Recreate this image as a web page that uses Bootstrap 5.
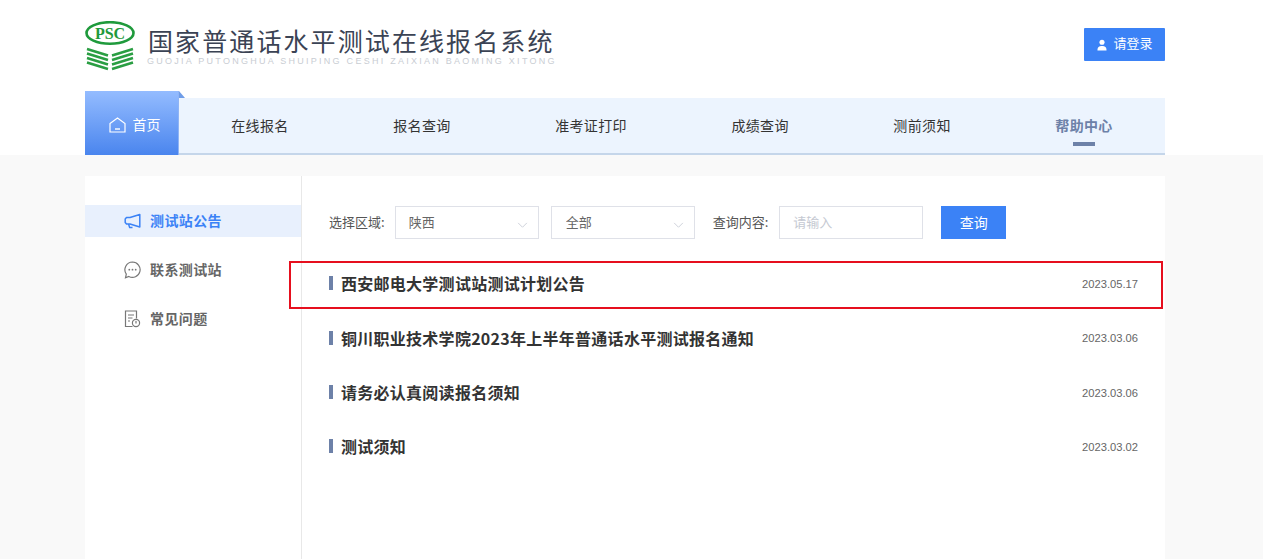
<!DOCTYPE html>
<html lang="zh-CN">
<head>
<meta charset="utf-8">
<title>国家普通话水平测试在线报名系统</title>
<link href="https://cdn.jsdelivr.net/npm/bootstrap@5.3.0/dist/css/bootstrap.min.css" rel="stylesheet">
<style>
html,body{overflow:hidden;height:559px}
body{font-family:"Noto Sans CJK SC","Liberation Sans",sans-serif;background:#f9f9f9;color:#333}
.top-band{background:#fff;height:155px}
.wrap{width:1080px;margin-left:85px}
.site-head{height:91px}
.logo-box{padding-top:21px;width:480px}
.logo-text{margin-left:12px}
.logo-title{font-size:25px;line-height:32px;height:32px;letter-spacing:2.1px;padding-left:1px;color:#3b4354;white-space:nowrap;margin-top:3px}
.logo-sub{font-family:"Liberation Sans",sans-serif;font-size:9px;line-height:10px;letter-spacing:2.26px;color:#c9cdd3;white-space:nowrap;margin-top:0}
.login-btn{width:81px;height:33px;margin-top:28px;background:#3b82f6;border:0;border-radius:1px;color:#fff;font-size:13px;padding:0 0 0 1px;gap:6px}
.login-btn span{padding-bottom:3px}
.main-nav{height:64px;align-items:flex-end}
.nav-tab{width:94px;height:64px;background:linear-gradient(#94bcff,#4a85ee);color:#fff;font-size:14px;gap:7px;position:relative;border-right:1px solid #8fb4f5;padding:2px 0 0 6px}
.nav-tab svg{margin-top:2px}
.nav-tab::after{content:"";position:absolute;left:94px;top:0;border-style:solid;border-width:7px 0 0 6px;border-color:transparent transparent transparent #6f9de8}
.nav-rest{height:57px;background:#ecf4fe;border-bottom:2px solid #c5d6ea;padding-bottom:0}
.nav-rest a{color:#333;font-size:14px;letter-spacing:.35px;line-height:54px;text-decoration:none;position:relative;display:block}
.nav-rest a.nav-on{color:#6d81a8;font-weight:700}
.nav-rest a.nav-on::after{content:"";position:absolute;left:18px;bottom:7px;width:22px;height:4px;background:#6d81a8}
.page-card{background:#fff;margin-top:21px;height:500px}
.side-col{width:217px;border-right:1px solid #e8e8e8;padding-top:29px}
.side-item{height:32px;margin-bottom:17px;padding-left:39px;gap:9px;font-size:14px;letter-spacing:.4px;font-weight:700;color:#666}
.side-item span{padding-bottom:2px}
.side-item.side-on{background:#e8f0fd;color:#3b82f6}
.body-col{padding:30px 27px 0}
.filter-row{height:33px;font-size:13px;color:#555}
.filter-row label{padding-bottom:2px}
.filter-sel{width:144px;height:33px;margin-left:10px;border:1px solid #dfe1e8;border-radius:0;font-size:13px;color:#666;padding:0 13px 2px;line-height:27px;box-shadow:none;
background-image:url("data:image/svg+xml,%3csvg xmlns='http://www.w3.org/2000/svg' viewBox='0 0 12 8'%3e%3cpath fill='none' stroke='%23c8ccd6' d='M1 1l5 5 5-5'/%3e%3c/svg%3e");background-size:11px 7px;background-position:right 10px top 15px}
.filter-sel+.filter-sel{margin-left:12px;padding-left:14px}
.filter-lab2{margin-left:18px}
.filter-inp{width:144px;height:33px;margin-left:11px;border:1px solid #dfe1e8;border-radius:0;font-size:13px;padding:0 13px 2px}
.filter-inp::placeholder{color:#c5c9d2;opacity:1}
.query-btn{width:65px;height:33px;margin-left:18px;background:#3b82f6;border:0;border-radius:0;color:#fff;font-size:14px;padding:0}
.news-list{margin-top:18px}
.news-row{height:54.4px;position:relative}
.news-title{font-size:16px;letter-spacing:.27px;font-weight:700;color:#333;text-decoration:none;padding-left:12px;padding-bottom:2px;position:relative}
.news-title::before{content:"";position:absolute;left:0;top:50%;margin-top:-8px;width:4px;height:14px;background:#6d81a8}
.news-date{font-family:"Liberation Sans",sans-serif;font-size:11.2px;color:#666}
.red-frame{position:absolute;left:-40px;right:-25px;top:4px;height:48px;border:2px solid #e60f1e;pointer-events:none}
</style>
</head>
<body>
<div class="top-band">
  <div class="wrap">
    <header class="site-head d-flex justify-content-between">
      <div class="logo-box d-flex">
        <svg width="50" height="50" viewBox="0 0 50 50" class="flex-shrink-0">
          <ellipse cx="25" cy="12" rx="23.500" ry="10.800" fill="none" stroke="#1f9a3c" stroke-width="2.600"/>
          <text x="25" y="17.500" text-anchor="middle" font-family="Liberation Serif,serif" font-weight="700" font-size="16" fill="#1f9a3c">PSC</text>
          <path d="M2 28l21 6.500M2 32.500l21 6.500M2 37l21 6.500M2 41.500l21 6.500M48 28l-21 6.500M48 32.500l-21 6.500M48 37l-21 6.500M48 41.500l-21 6.500" fill="none" stroke="#2a9e43" stroke-width="2.600"/>
        </svg>
        <div class="logo-text">
          <div class="logo-title">国家普通话水平测试在线报名系统</div>
          <div class="logo-sub">GUOJIA PUTONGHUA SHUIPING CESHI ZAIXIAN BAOMING XITONG</div>
        </div>
      </div>
      <button class="btn login-btn d-flex align-items-center justify-content-center" type="button">
        <svg width="10" height="12" viewBox="0 0 11 12"><circle cx="5.500" cy="3" r="2.800" fill="#fff"/><path d="M.5 12c0-4 1.800-5 5-5s5 1 5 5z" fill="#fff"/></svg>
        <span>请登录</span>
      </button>
    </header>
    <nav class="main-nav d-flex">
      <a class="nav-tab d-flex align-items-center justify-content-center text-decoration-none" href="#">
        <svg width="17" height="16" viewBox="0 0 17 16"><path d="M1 6.500L8.500 1 16 6.500V15H1z" fill="none" stroke="#fff" stroke-width="1.200"/><path d="M6 12h5" stroke="#fff" stroke-width="1.400"/></svg>
        <span>首页</span>
      </a>
      <div class="nav-rest flex-grow-1 d-flex justify-content-around">
        <a href="#">在线报名</a>
        <a href="#">报名查询</a>
        <a href="#">准考证打印</a>
        <a href="#">成绩查询</a>
        <a href="#">测前须知</a>
        <a href="#" class="nav-on">帮助中心</a>
      </div>
    </nav>
  </div>
</div>
<div class="wrap page-card d-flex">
  <aside class="side-col flex-shrink-0">
    <div class="side-item side-on d-flex align-items-center">
      <svg width="17" height="17" viewBox="0 0 17 17"><path d="M15.800 1.500v12.500L6 11H2.500L1.200 9.500V6L2.500 4.500H6zM4.500 11l1.200 3.500h2.800" fill="none" stroke="#3b82f6" stroke-width="1.500" stroke-linejoin="round"/></svg>
      <span>测试站公告</span>
    </div>
    <div class="side-item d-flex align-items-center">
      <svg width="17" height="18" viewBox="0 0 17 18"><path d="M8.500 1a7.700 7.700 0 1 1-3.700 14.500L1.500 16.800l.8-3.700A7.700 7.700 0 0 1 8.500 1z" fill="none" stroke="#777" stroke-width="1.200"/><circle cx="5.300" cy="8.700" r=".9" fill="#777"/><circle cx="8.500" cy="8.700" r=".9" fill="#777"/><circle cx="11.700" cy="8.700" r=".9" fill="#777"/></svg>
      <span>联系测试站</span>
    </div>
    <div class="side-item d-flex align-items-center">
      <svg width="17" height="18" viewBox="0 0 17 18"><path d="M8.500 16.500H1.500V1h11v7.500M4 5h6M4 8h4.500M4 11h2" fill="none" stroke="#777" stroke-width="1.200"/><circle cx="12" cy="13" r="3.600" fill="none" stroke="#777" stroke-width="1.200"/><path d="M12 11v2.500" stroke="#777" stroke-width="1.200"/></svg>
      <span>常见问题</span>
    </div>
  </aside>
  <main class="body-col flex-grow-1">
    <div class="filter-row d-flex align-items-center">
      <label>选择区域:</label>
      <select class="form-select filter-sel"><option>陕西</option></select>
      <select class="form-select filter-sel"><option>全部</option></select>
      <label class="filter-lab2">查询内容:</label>
      <input class="form-control filter-inp" type="text" placeholder="请输入">
      <button class="btn query-btn" type="button">查询</button>
    </div>
    <div class="news-list">
      <div class="news-row d-flex align-items-center justify-content-between">
        <a class="news-title" href="#">西安邮电大学测试站测试计划公告</a>
        <span class="news-date">2023.05.17</span>
        <div class="red-frame"></div>
      </div>
      <div class="news-row d-flex align-items-center justify-content-between">
        <a class="news-title" href="#">铜川职业技术学院2023年上半年普通话水平测试报名通知</a>
        <span class="news-date">2023.03.06</span>
      </div>
      <div class="news-row d-flex align-items-center justify-content-between">
        <a class="news-title" href="#">请务必认真阅读报名须知</a>
        <span class="news-date">2023.03.06</span>
      </div>
      <div class="news-row d-flex align-items-center justify-content-between">
        <a class="news-title" href="#">测试须知</a>
        <span class="news-date">2023.03.02</span>
      </div>
    </div>
  </main>
</div>
<script src="https://cdn.jsdelivr.net/npm/bootstrap@5.3.0/dist/js/bootstrap.bundle.min.js"></script>
</body>
</html>
